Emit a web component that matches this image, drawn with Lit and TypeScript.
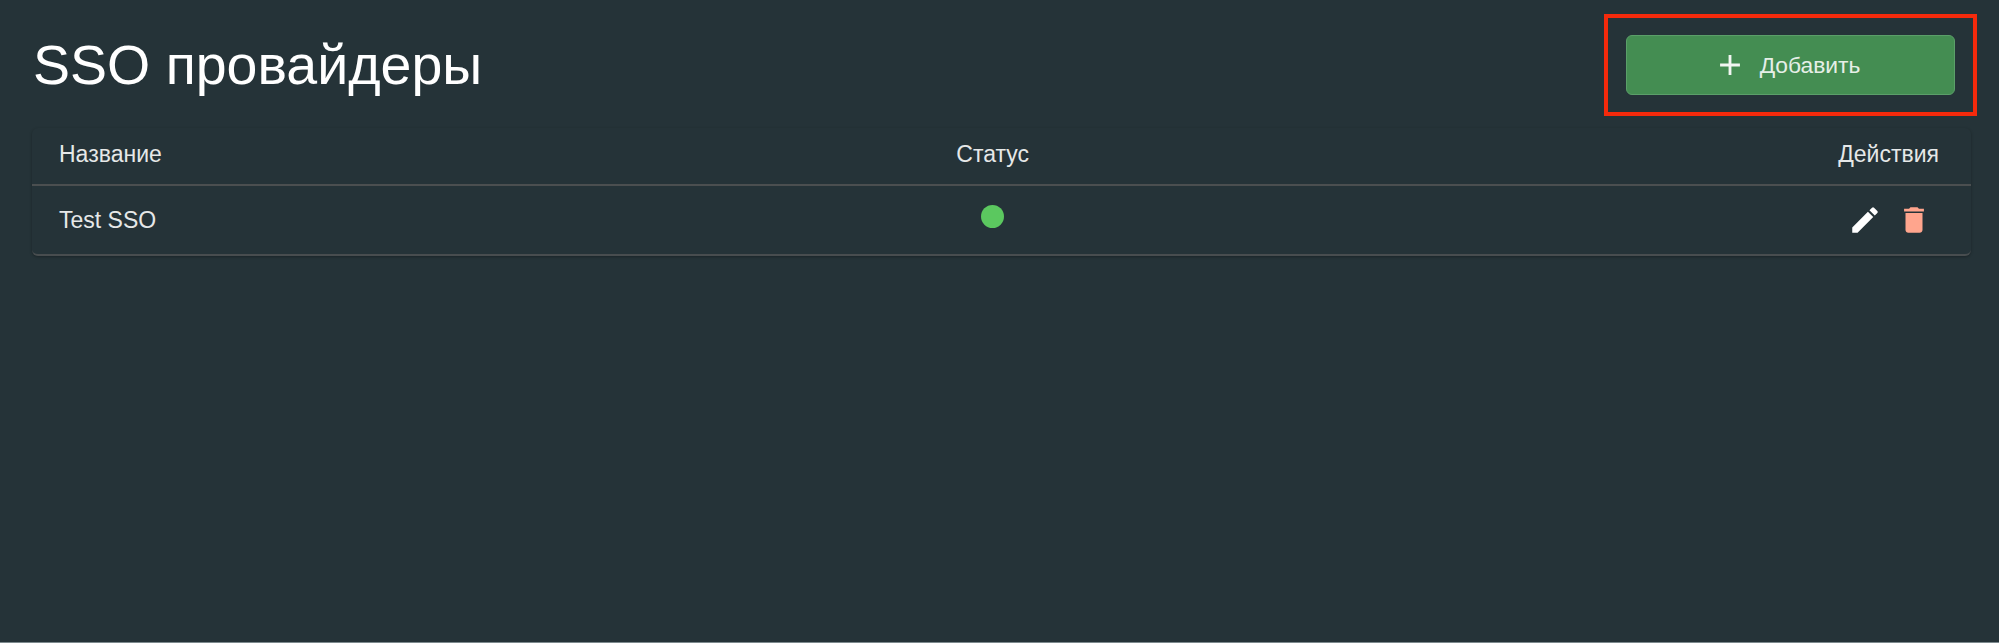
import { LitElement, html, css } from "lit";
import { customElement } from "lit/decorators.js";

@customElement("app-root")
export class AppRoot extends LitElement {
  static styles = css`
    :host {
      display: block;
      height: 643px;
      background: #253338;
      color: #fff;
      font-family: "Liberation Sans", Arial, sans-serif;
      box-sizing: border-box;
      padding: 14px 22px 0 32px;
      overflow: hidden;
      border-bottom: 1px solid #7d8a8e;
    }
    .top {
      display: flex;
      justify-content: space-between;
      align-items: center;
      height: 102px;
      margin-bottom: 12px;
    }
    h1 {
      margin: 0;
      font-size: 55.5px;
      font-weight: 400;
      line-height: 72px;
      padding-left: 1px;
    }
    .frame {
      box-sizing: border-box;
      width: 373px;
      height: 102px;
      border: 4px solid #f52a0c;
      padding: 17px 18px;
    }
    .btn {
      box-sizing: border-box;
      width: 100%;
      height: 60px;
      display: flex;
      align-items: center;
      justify-content: center;
      gap: 13px;
      padding-right: 8px;
      background: #448d52;
      border: 1px solid #5b9f69;
      border-radius: 6px;
      color: #e6efe7;
      font-size: 22.8px;
    }
    .btn svg { width: 34px; height: 34px; display: block; }
    .table {
      margin-right: 6px;
      border-radius: 6px;
      box-shadow: 0 1px 3px rgba(0,0,0,.3);
      border-bottom: 2px solid #484d4f;
      font-size: 23px;
      color: #e6e8e8;
    }
    .row {
      display: grid;
      grid-template-columns: 0.99fr 1fr 1.01fr;
      padding: 0 32px 0 27px;
      align-items: center;
    }
    .head { height: 58px; border-bottom: 2px solid #4b4f50; padding-bottom: 4px; box-sizing: border-box; }
    .body { height: 68px; }
    .c { text-align: center; }
    .r { text-align: right; }
    .dot {
      display: block;
      width: 23px;
      height: 23px;
      border-radius: 50%;
      background: #5bc85f;
      margin: -8px auto 0;
    }
    .actions { display: flex; justify-content: flex-end; gap: 15.5px; padding-right: 8px; }
    .actions svg { width: 34px; height: 34px; display: block; }
  `;

  render() {
    return html`
      <div class="top">
        <h1>SSO провайдеры</h1>
        <div class="frame">
          <div class="btn">
            <svg viewBox="0 0 24 24" fill="#f2f6f2"><path d="M19 13h-6v6h-2v-6H5v-2h6V5h2v6h6v2z"/></svg>
            <span>Добавить</span>
          </div>
        </div>
      </div>
      <div class="table">
        <div class="row head">
          <div>Название</div>
          <div class="c">Статус</div>
          <div class="r">Действия</div>
        </div>
        <div class="row body">
          <div>Test SSO</div>
          <div class="c"><span class="dot"></span></div>
          <div class="actions">
            <svg viewBox="0 0 24 24" fill="#ffffff"><path d="M3 17.25V21h3.75L17.81 9.94l-3.75-3.75L3 17.25zM20.71 7.04a1 1 0 0 0 0-1.41l-2.34-2.34a1 1 0 0 0-1.41 0l-1.83 1.83 3.75 3.75 1.83-1.83z"/></svg>
            <svg viewBox="0 0 24 24" fill="#ffa58d"><path d="M6 19c0 1.1.9 2 2 2h8c1.1 0 2-.9 2-2V7H6v12zM19 4h-3.5l-1-1h-5l-1 1H5v2h14V4z"/></svg>
          </div>
        </div>
      </div>
    `;
  }
}
